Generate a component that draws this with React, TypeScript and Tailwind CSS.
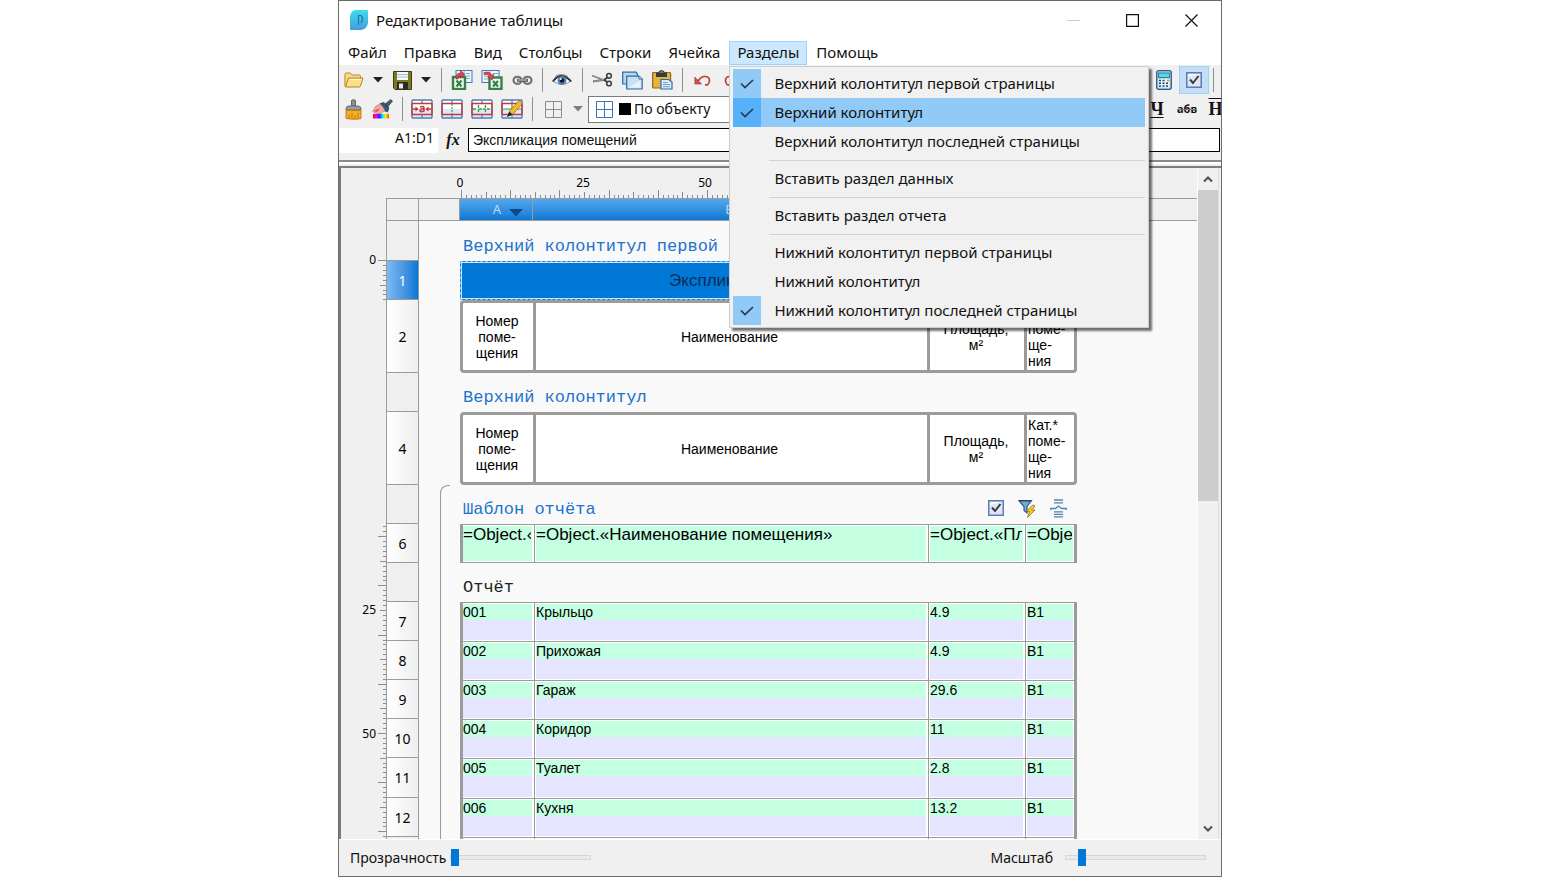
import React from "react";

const UI = "font-['Noto_Sans','Open_Sans',sans-serif]";
const ARIAL = "font-['Liberation_Sans',Arial,sans-serif]";
const MONO = "font-['Liberation_Mono','Courier_New',monospace]";

/* ---------- icons ---------- */

function AppLogo() {
  return (
    <svg width="18" height="20" viewBox="0 0 18 20" aria-hidden="true">
      <defs>
        <linearGradient id="logo" x1="0" y1="0" x2="0" y2="1">
          <stop offset="0" stopColor="#3fdcf0" />
          <stop offset="1" stopColor="#449bd8" />
        </linearGradient>
      </defs>
      <path d="M5 0H17Q18 0 18 1V13Q17 19 11 20H1Q0 20 0 19V6Q1 1 5 0Z" fill="url(#logo)" />
      <path d="M8.500 5V15M8.500 5.500H10.500Q12.500 6 12.500 9T10.500 12.500" fill="none" stroke="#1f74ab" strokeWidth="1.200" />
    </svg>
  );
}

function FolderIcon() {
  return (
    <svg width="20" height="16" viewBox="0 0 20 16" aria-hidden="true">
      <path d="M1 14.500V2.500Q1 1 2.500 1H6L8 3H15.500Q16.500 3 16.500 4.500V6" fill="#f7dc86" stroke="#b8861b" />
      <path d="M1.500 15 4.500 6H19L16.500 14Q16 15 15 15Z" fill="#fbe08c" stroke="#b8861b" />
      <path d="M5.500 7.500H17" stroke="#fff8d8" />
    </svg>
  );
}

function SaveIcon() {
  return (
    <svg width="19" height="19" viewBox="0 0 19 19" aria-hidden="true">
      <path d="M.5.5H18.500V18.500H2L.5 17Z" fill="#7d7a1e" stroke="#3b3a1e" />
      <rect x="4" y="1" width="11" height="8" fill="#f4f7fa" />
      <path d="M4 3.500H15M4 6H15" stroke="#a9bccd" />
      <rect x="4" y="11" width="11" height="7.500" fill="#2a2a28" />
      <rect x="6" y="12.500" width="4" height="5" fill="#e9e9e9" />
    </svg>
  );
}

function Caret({ light = false }: { light?: boolean }) {
  return (
    <svg width="10" height="6" viewBox="0 0 10 6" aria-hidden="true">
      <path d="M0 0H10L5 5.500Z" fill={light ? "#7f7f7f" : "#222"} />
    </svg>
  );
}

function ExcelOutIcon() {
  return (
    <svg width="22" height="20" viewBox="0 0 22 20" aria-hidden="true">
      <rect x="5" y=".5" width="16" height="12" fill="#eef5fc" stroke="#3f7bb5" />
      <path d="M15 3.500H19M15 6H19M15 8.500H19M13 .5V12" stroke="#7fa9d1" />
      <rect x="2" y="7" width="12" height="12" fill="#eaf5ea" stroke="#37804b" strokeWidth="2.400" />
      <path d="m5.500 10.500 5 6M10.500 10.500l-5 6" stroke="#2e7d46" strokeWidth="2" />
      <path d="M5 9Q4.500 3 9.500 3V.5L14 4.500 9.500 8V5.500Q7 5.500 7 9Z" fill="#e0444a" stroke="#a4252b" strokeWidth=".6" />
    </svg>
  );
}

function ExcelInIcon() {
  return (
    <svg width="22" height="20" viewBox="0 0 22 20" aria-hidden="true">
      <rect x="1" y=".5" width="17" height="12" fill="#eef5fc" stroke="#3f7bb5" />
      <path d="M12 3.500H17M3 6H8M3 9H8M9 .5V12" stroke="#7fa9d1" />
      <rect x="8.500" y="7.500" width="12" height="11.500" fill="#eaf5ea" stroke="#37804b" strokeWidth="2.400" />
      <path d="m12 11 5 5.500M17 11l-5 5.500" stroke="#2e7d46" strokeWidth="2" />
      <path d="M3 2.500Q9 1 10.500 5L13 4.500 11 10 6.500 7 8.500 6Q7 3.500 3 4.500Z" fill="#e0444a" stroke="#a4252b" strokeWidth=".6" />
    </svg>
  );
}

function LinkIcon() {
  return (
    <svg width="21" height="11" viewBox="0 0 21 11" fill="none" aria-hidden="true">
      <rect x="1.500" y="1.800" width="8" height="7" rx="3.500" stroke="#777" strokeWidth="2.200" />
      <rect x="11.500" y="1.800" width="8" height="7" rx="3.500" stroke="#777" strokeWidth="2.200" />
      <path d="M5 5.300H16" stroke="#5a5a5a" strokeWidth="3" />
      <path d="M6 5H15" stroke="#d4d4d4" strokeWidth="1" />
    </svg>
  );
}

function EyeIcon() {
  return (
    <svg width="20" height="14" viewBox="0 0 20 14" aria-hidden="true">
      <path d="M1 8Q9-1 19 8Q10 15 1 8Z" fill="#fff" stroke="#8a8a8a" />
      <path d="M.8 8.500Q9-2.500 19.300 8.500" fill="none" stroke="#333" strokeWidth="1.800" />
      <path d="M3 3.500Q9-.5 16 3.500" fill="none" stroke="#777" strokeWidth=".8" />
      <circle cx="10" cy="7.500" r="4.500" fill="#4f83b8" />
      <circle cx="10" cy="7.500" r="2.200" fill="#101820" />
      <circle cx="8.700" cy="6" r="1" fill="#fff" />
    </svg>
  );
}

function ScissorsIcon() {
  return (
    <svg width="22" height="16" viewBox="0 0 22 16" fill="none" aria-hidden="true">
      <path d="M1 3.500 14 8.500M2 9.500 15 7.500" stroke="#6b6b6b" strokeWidth="1.800" />
      <path d="M1 3.500 13 7.500M3 9.500 13 7.500" stroke="#b9b9b9" strokeWidth=".7" />
      <circle cx="18" cy="3.800" r="2.300" stroke="#3e3e3e" strokeWidth="1.600" />
      <circle cx="18" cy="11.500" r="2.300" stroke="#3e3e3e" strokeWidth="1.600" />
      <path d="M13 8 16.300 5.500M13 8 16.300 10" stroke="#3e3e3e" strokeWidth="1.800" />
    </svg>
  );
}

function CopyIcon() {
  return (
    <svg width="21" height="19" viewBox="0 0 21 19" aria-hidden="true">
      <path d="M.7 1.200H14L15.500 3V13H.7Z" fill="#b9d6ee" stroke="#2f69a3" strokeWidth="1.200" />
      <path d="M4.700 5.200H17L20.200 8V18H4.700Z" fill="#c7e0f4" stroke="#2f69a3" strokeWidth="1.200" />
      <path d="M17 5.200V8H20.200" fill="#fff" stroke="#2f69a3" />
      <path d="M6 16.500 18.500 9.500V16.500Z" fill="#e8f4fd" />
    </svg>
  );
}

function PasteIcon() {
  return (
    <svg width="21" height="20" viewBox="0 0 21 20" aria-hidden="true">
      <rect x=".6" y="2.500" width="18" height="15.500" rx="1" fill="#e2b247" stroke="#8f6a16" strokeWidth="1.200" />
      <rect x="4" y="2.500" width="11" height="4.500" fill="#3a3a36" />
      <path d="M7 3V1.500Q9.500-.5 12 1.500V3" fill="#7a7a72" stroke="#3a3a36" />
      <path d="M9 9.500H16.500L20 12V19H9Z" fill="#dcecf9" stroke="#2f69a3" strokeWidth="1.200" />
      <path d="M11 12.500H15.500M11 14.500H18M11 16.700H18" stroke="#6d9dc9" />
    </svg>
  );
}

function UndoIcon({ flip = false }: { flip?: boolean }) {
  return (
    <svg width="17" height="11" viewBox="0 0 17 11" fill="none" aria-hidden="true">
      <g transform={flip ? "matrix(-1 0 0 1 17 0)" : undefined}>
        <path d="M4 6.500Q6.500 1.500 11 1.500Q15.500 1.500 15.500 5.500Q15.500 8.500 13.500 9.800H11" stroke="#b9403d" strokeWidth="1.700" />
        <path d="M.8 2V9H7.500Z" fill="#c9504c" stroke="#a63a37" strokeWidth=".6" />
      </g>
    </svg>
  );
}

function CalculatorIcon() {
  return (
    <svg width="16" height="20" viewBox="0 0 16 20" aria-hidden="true">
      <rect x=".7" y=".7" width="14.600" height="18.600" rx="2" fill="#b5d2e8" stroke="#2b5f8c" strokeWidth="1.300" />
      <rect x="2.500" y="3" width="11" height="4.500" fill="#59d8e0" stroke="#1b6d8a" strokeWidth=".8" />
      <rect x="2.500" y="9" width="11" height="8.500" fill="#eef5fa" />
      <path d="M3 10.500H10M3 13.300H13M3 16H13" stroke="#20415f" strokeWidth="1.600" strokeDasharray="2 1.500" />
      <path d="M11 10.500H13.500" stroke="#e09a2c" strokeWidth="1.800" />
    </svg>
  );
}

function CheckBoxIcon({ size = 16 }: { size?: number }) {
  return (
    <svg width={size} height={size} viewBox="0 0 16 16" aria-hidden="true">
      <rect x=".8" y=".8" width="14.400" height="14.400" fill="#f6f9fd" stroke="#5b7fb4" strokeWidth="1.600" />
      <path d="M2 14V5L14 2V14Z" fill="#d5e0f2" opacity=".7" />
      <path d="m4 7.500 3 3.500 5.500-7" fill="none" stroke="#3c3c3c" strokeWidth="2" />
    </svg>
  );
}

function BrushIcon() {
  return (
    <svg width="17" height="21" viewBox="0 0 17 21" aria-hidden="true">
      <path d="M6.500 1.500Q8.500-.3 10.500 1.500V7H6.500Z" fill="#8d8d8d" stroke="#666" />
      <path d="M1 10Q1 7 4 7H13Q16 7 16 10V11H1Z" fill="#9b9b9b" stroke="#6b6b6b" />
      <path d="M1 11.500H16V19.500Q12 21 1 19.500Z" fill="#f4ad25" stroke="#c47f0c" />
      <path d="M4 16V20M7 14V20M10 16V20M13 14V20" stroke="#c47f0c" />
    </svg>
  );
}

function ColorBrushIcon() {
  return (
    <svg width="21" height="20" viewBox="0 0 21 20" aria-hidden="true">
      <defs>
        <linearGradient id="rainbow">
          <stop offset="0" stopColor="#f00" />
          <stop offset=".2" stopColor="#f0f" />
          <stop offset=".4" stopColor="#22f" />
          <stop offset=".6" stopColor="#0ee" />
          <stop offset=".8" stopColor="#fe0" />
          <stop offset="1" stopColor="#f40" />
        </linearGradient>
      </defs>
      <rect x="1" y="15" width="16" height="4.500" fill="url(#rainbow)" />
      <path d="M12 6 18.500.5 20.500 2 15 9Z" fill="#4a5a6d" stroke="#26313e" strokeWidth=".6" />
      <path d="M8 4.500 12 3.500 17 9 15.500 13 10 11Z" fill="#33567d" stroke="#1c2f47" strokeWidth=".6" />
      <path d="M.5 12.500 4 7 8.500 5 13 11 9 14.500H4Z" fill="#eda9a2" stroke="#b36b64" strokeWidth=".6" />
      <path d="M2 12 8 9 5 13Z" fill="#d84a4a" />
    </svg>
  );
}

function TableIcon({ kind }: { kind: "merge" | "split" | "cells" | "draw" }) {
  return (
    <svg width="22" height="20" viewBox="0 0 22 20" fill="none" aria-hidden="true">
      <path d="M1 1H21V19H1Z" fill="#fff" />
      <path d="M1 10H21V18H1Z" fill="#dbe8f5" />
      <path d="M11 1V4M11 16V19" stroke="#4c7fb5" strokeWidth="1.200" />
      <path d="M1 19V1M21 19V1M1 19H21M1 1H21" stroke="#4c7fb5" strokeWidth="1.400" />
      <path d="M1 4.500H21M1 15.500H21M1 4V16M21 4V16" stroke="#c23b3e" strokeWidth="1.400" />
      {kind === "merge" && (
        <>
          <path d="M2 10H7M20 10H15M9 8Q13 6.500 13 9V12.500M13 10Q9 9.500 9 11.500T13 12" stroke="#c23b3e" strokeWidth="1.600" />
          <path d="M4.500 7.500 7.500 10 4.500 12.500ZM17.500 7.500 14.500 10 17.500 12.500Z" fill="#c23b3e" />
        </>
      )}
      {kind === "split" && <path d="M11 5V15" stroke="#3c9a4c" strokeWidth="1.200" strokeDasharray="2 1" />}
      {kind === "cells" && (
        <path d="M2 10H6M8 10H14M16 10H20M7.500 6V14M14.500 6V14" stroke="#3c9a4c" strokeWidth="1.300" strokeDasharray="3 1" />
      )}
      {kind === "draw" && (
        <>
          <path d="M11 5V15M2 10H20" stroke="#3c9a4c" strokeWidth="1.200" />
          <path d="M7 17 9 11.500 18 1.500 21.500 4.500 12.500 14.500Z" fill="#f5b92b" stroke="#9a6a10" strokeWidth=".8" />
          <path d="M6 18 8.300 12.500 11.500 15.500Z" fill="#1d1d1d" />
        </>
      )}
    </svg>
  );
}

function GridIcon({ color }: { color: string }) {
  return (
    <svg width="17" height="17" viewBox="0 0 17 17" fill="none" stroke={color} aria-hidden="true">
      <path d="M.5.5H16.500V16.500H.5ZM8.500 1V16M1 8.500H16" />
    </svg>
  );
}

function FilterIcon() {
  return (
    <svg width="18" height="19" viewBox="0 0 18 19" aria-hidden="true">
      <path d="M.8 1.500H13.500L9 7.500V14L6 11.500V7.500Z" fill="#7fa8cf" stroke="#2c5d8f" strokeWidth="1.200" />
      <path d="M1 1.800H13" stroke="#1f4a78" strokeWidth="1.500" />
      <path d="M14.500 6 8.500 12.500H11.500L9.500 18.500 17 11H13.500L17 7Z" fill="#f8cf2c" stroke="#9b6d06" strokeWidth=".8" />
    </svg>
  );
}

function SplitRowsIcon() {
  return (
    <svg width="17" height="19" viewBox="0 0 17 19" fill="none" stroke="#4d86ad" strokeWidth="1.300" aria-hidden="true">
      <path d="M4 1H13M4 3.800H13M4 12.800H13M4 15.300H13M4 17.800H13" />
      <path d="M.7 11V9.500H5.500L8.500 7 11.500 9.500H16.300V11" />
    </svg>
  );
}

function CheckMark() {
  return (
    <svg width="14" height="10" viewBox="0 0 14 10" aria-hidden="true">
      <path d="m1 4.500 4 4L13 1" fill="none" stroke="#243b52" strokeWidth="1.700" />
    </svg>
  );
}

/* ---------- toolbar ---------- */

function Tool({ label, className = "w-[30px]", children }: { label: string; className?: string; children: React.ReactNode }) {
  return (
    <button type="button" aria-label={label} className={`flex h-7 shrink-0 items-center justify-center ${className}`}>
      {children}
    </button>
  );
}

function Sep({ className = "w-2.5" }: { className?: string }) {
  return (
    <span className={`flex shrink-0 justify-center ${className}`}>
      <span className="h-6 w-px bg-[#8f8f8f]" />
    </span>
  );
}

/* ---------- menu ---------- */

type Entry = { text: string; checked?: boolean; active?: boolean } | null;

const sectionsMenu: Entry[] = [
  { text: "Верхний колонтитул первой страницы", checked: true },
  { text: "Верхний колонтитул", checked: true, active: true },
  { text: "Верхний колонтитул последней страницы" },
  null,
  { text: "Вставить раздел данных" },
  null,
  { text: "Вставить раздел отчета" },
  null,
  { text: "Нижний колонтитул первой страницы" },
  { text: "Нижний колонтитул" },
  { text: "Нижний колонтитул последней страницы", checked: true },
];

function SectionsMenu() {
  return (
    <div
      role="menu"
      className="absolute top-full left-0 z-20 mt-px w-[420px] border border-[#ccc] bg-[#f1f1f1] px-[3px] py-0.5 shadow-[3px_3px_2px_rgba(0,0,0,0.55)]"
    >
      {sectionsMenu.map((item, i) =>
        item === null ? (
          <div key={i} role="separator" className="flex h-2 items-center pl-9">
            <span className="h-px w-full bg-[#d2d2d2]" />
          </div>
        ) : (
          <button
            key={i}
            type="button"
            role="menuitemcheckbox"
            aria-checked={!!item.checked}
            className={`flex h-[29px] w-full items-center text-left ${item.active ? "bg-[#91c9f7]" : ""}`}
          >
            <span
              className={`flex h-full w-7 shrink-0 items-center justify-center ${
                item.checked ? (item.active ? "bg-[#56b0fa]" : "bg-[#91c9f7]") : ""
              }`}
            >
              {item.checked && <CheckMark />}
            </span>
            <span className="pb-px pl-[13px] whitespace-nowrap">{item.text}</span>
          </button>
        ),
      )}
    </div>
  );
}

/* ---------- rulers ---------- */

const UNIT = 4.92;
const range = (a: number, b: number) => Array.from({ length: b - a + 1 }, (_, i) => a + i);
const tickSize = (v: number) => (v % 10 === 0 ? 8 : v % 5 === 0 ? 6 : 3);

function TopRuler() {
  return (
    <svg className="block h-[30px] w-full" aria-hidden="true">
      {range(0, 125).map((v) => {
        const x = Math.round(120 + v * UNIT) + 0.5;
        return <path key={v} d={`M${x} ${30 - tickSize(v)}V30`} stroke="#8c8c8c" />;
      })}
      <g className={`${UI} text-[12px]`} fill="#000" textAnchor="middle">
        <text x="119" y="19">0</text>
        <text x="242" y="19">25</text>
        <text x="364" y="19">50</text>
      </g>
    </svg>
  );
}

function SideRuler() {
  const tick = (v: number, y: number, key: string) => {
    const yy = Math.round(y) + 0.5;
    return <path key={key} d={`M${45 - tickSize(v)} ${yy}H45`} stroke="#8c8c8c" />;
  };
  return (
    <svg className="block h-full w-full" aria-hidden="true">
      {range(0, 8).map((v) => tick(v, 62 + v * UNIT, `a${v}`))}
      {range(8, 71).map((v) => tick(v, 535 - (50 - v) * UNIT, `b${v}`))}
      <g className={`${UI} text-[12px]`} fill="#000" textAnchor="end">
        <text x="35" y="66">0</text>
        <text x="35" y="416">25</text>
        <text x="35" y="540">50</text>
      </g>
    </svg>
  );
}

/* ---------- sheet ---------- */

function RowHead({ n, selected = false }: { n?: string; selected?: boolean }) {
  const fill = selected
    ? "bg-linear-to-r from-[#7bbaf0] to-[#0078d7] text-white"
    : n
      ? "bg-linear-to-r from-white to-[#eeeeee]"
      : "bg-[#efefef]";
  return (
    <th scope="row" className={`border-r border-b border-l border-[#9b9b9b] p-0 text-center text-[14px] font-normal ${fill}`}>
      {n}
    </th>
  );
}

function Bracket({ start = false }: { start?: boolean }) {
  return (
    <td className="p-0">
      <div className={`ml-[21px] h-full border-l border-[#9b9b9b] ${start ? "w-2.5 rounded-tl-lg border-t" : ""}`} />
    </td>
  );
}

function SectionRow({ title, height, black = false, bracket, tools = false }: {
  title: string;
  height: string;
  black?: boolean;
  bracket?: "start" | "mid";
  tools?: boolean;
}) {
  return (
    <tr className={height}>
      <RowHead />
      {bracket ? <Bracket start={bracket === "start"} /> : <td />}
      <td colSpan={4} className="p-0 align-bottom">
        <div className="flex items-center justify-between pr-2.5 pb-1 pl-[3px]">
          <span className={`${MONO} text-[17px] leading-5 whitespace-nowrap ${black ? "text-[#222]" : "text-[#1c72cc]"}`}>{title}</span>
          {tools && (
            <span className="flex h-5 items-center gap-3.5 pb-1">
              <button type="button" aria-label="Условие отчёта"><CheckBoxIcon /></button>
              <button type="button" aria-label="Быстрый фильтр"><FilterIcon /></button>
              <button type="button" aria-label="Разделить строки"><SplitRowsIcon /></button>
            </span>
          )}
        </div>
      </td>
      <td />
    </tr>
  );
}

const HEAD_CELL = "border-y-[3px] border-l-[3px] border-[#9b9b9b] bg-white p-0 text-[14px] leading-4";

function CaptionRow({ n }: { n: string }) {
  return (
    <tr className="h-[73px]">
      <RowHead n={n} />
      <td />
      <td className={`${HEAD_CELL} rounded-l-sm pr-0.5 text-center`}>Номер<br />поме-<br />щения</td>
      <td className={`${HEAD_CELL} pr-1 text-center`}>Наименование</td>
      <td className={`${HEAD_CELL} pr-0.5 text-center`}>Площадь,<br />м²</td>
      <td className={`${HEAD_CELL} rounded-r-sm border-r-[3px] pl-px text-left`}>Кат.*<br />поме-<br />ще-<br />ния</td>
      <td />
    </tr>
  );
}

const CELL = "border-t border-[#9b9b9b] overflow-hidden whitespace-nowrap align-top p-0 pl-[3px]";
const EDGE = "shadow-[inset_3px_0_0_#9b9b9b,inset_0_0_0_1px_#fff]";
const INNER = "shadow-[inset_1px_0_0_#fff,inset_2px_0_0_#9b9b9b,inset_3px_0_0_#fff,inset_0_0_0_1px_#fff]";
const LAST =
  "border-r-[3px] shadow-[inset_1px_0_0_#fff,inset_2px_0_0_#9b9b9b,inset_3px_0_0_#fff,inset_0_0_0_1px_#fff]";

function DataRow({ n, cells, height }: { n?: string; cells: string[]; height: string }) {
  const fill = "bg-[linear-gradient(#c4ffe1_0_17px,#e5e5ff_17px)] text-[14px] leading-[19px]";
  return (
    <tr className={height}>
      <RowHead n={n} />
      <Bracket />
      {cells.map((c, i) => (
        <td key={i} className={`${CELL} ${fill} ${i === 0 ? EDGE : i === 3 ? LAST : INNER}`}>
          {c}
        </td>
      ))}
      <td />
    </tr>
  );
}

const rooms = [
  { n: "7", h: "h-[39px]", c: ["001", "Крыльцо", "4.9", "В1"] },
  { n: "8", h: "h-[39px]", c: ["002", "Прихожая", "4.9", "В1"] },
  { n: "9", h: "h-[39px]", c: ["003", "Гараж", "29.6", "В1"] },
  { n: "10", h: "h-[39px]", c: ["004", "Коридор", "11", "В1"] },
  { n: "11", h: "h-10", c: ["005", "Туалет", "2.8", "В1"] },
  { n: "12", h: "h-[39px]", c: ["006", "Кухня", "13.2", "В1"] },
];

function Sheet() {
  const colHead =
    "border-y border-r border-[#9b9b9b] bg-linear-to-b from-[#52a8ee] to-[#0a78d2] p-0 text-center text-[13px] font-normal leading-none text-[#b9dcf8]";
  const templateCells = ["=Object.«Номер»", "=Object.«Наименование помещения»", "=Object.«Площадь»", "=Object.«Категория»"];
  return (
    <table className={`h-px w-full table-fixed border-separate border-spacing-0 bg-[#f9f9f9] text-black ${ARIAL}`}>
      <colgroup>
        <col className="w-[33px]" />
        <col className="w-[41px]" />
        <col className="w-[73px]" />
        <col className="w-[394px]" />
        <col className="w-[97px]" />
        <col className="w-[53px]" />
        <col />
      </colgroup>
      <thead className={UI}>
        <tr className="h-[23px]">
          <td className="border border-[#9b9b9b] bg-[#efefef] p-0" />
          <td className="border-y border-r border-[#9b9b9b] bg-[#efefef] p-0" />
          <th scope="col" className={colHead}>
            <span className="flex items-center justify-center gap-2 pl-6">
              A
              <svg width="14" height="8" viewBox="0 0 14 8" className="mt-1.5" aria-hidden="true">
                <path d="M0 0H14L7 7.500Z" fill="#0b4a86" />
              </svg>
            </span>
          </th>
          <th scope="col" className={colHead}>B</th>
          <th scope="col" className={colHead}>C</th>
          <th scope="col" className={colHead}>D</th>
          <td className="border-y border-[#9b9b9b] bg-[#efefef] p-0" />
        </tr>
      </thead>
      <tbody className="[&_th]:font-['Noto_Sans',sans-serif]">
        <SectionRow title="Верхний колонтитул первой страницы" height="h-10" />
        <tr className="h-[39px]">
          <RowHead n="1" selected />
          <td />
          <td
            colSpan={4}
            className="border border-dashed border-[#7fb9ea] bg-[#0078d7] p-0 text-center text-[17px] text-[#0a2d55] shadow-[inset_0_0_0_1px_#cfe6fa]"
          >
            Экспликация помещений
          </td>
          <td />
        </tr>
        <CaptionRow n="2" />
        <SectionRow title="Верхний колонтитул" height="h-[39px]" />
        <CaptionRow n="4" />
        <SectionRow title="Шаблон отчёта" height="h-[39px]" bracket="start" tools />
        <tr className="h-[39px]">
          <RowHead n="6" />
          <Bracket />
          {templateCells.map((c, i) => (
            <td
              key={c}
              className={`${CELL} border-b bg-[#c4ffe1] text-[17px] leading-5 ${i === 0 ? EDGE : i === 3 ? LAST : INNER}`}
            >
              <div className="mr-0.5 overflow-hidden">{c}</div>
            </td>
          ))}
          <td />
        </tr>
        <SectionRow title="Отчёт" height="h-[39px]" bracket="mid" black />
        {rooms.map((r) => (
          <DataRow key={r.n} n={r.n} cells={r.c} height={r.h} />
        ))}
        <DataRow cells={["", "", "", ""]} height="h-[39px]" />
      </tbody>
    </table>
  );
}

/* ---------- window ---------- */

const SLIDER =
  "m-0 h-[18px] w-[141px] appearance-none bg-transparent [&::-webkit-slider-runnable-track]:h-[5px] [&::-webkit-slider-runnable-track]:border [&::-webkit-slider-runnable-track]:border-[#d6d6d6] [&::-webkit-slider-runnable-track]:bg-[#e7eaea] [&::-webkit-slider-thumb]:-mt-[7px] [&::-webkit-slider-thumb]:h-[17px] [&::-webkit-slider-thumb]:w-2 [&::-webkit-slider-thumb]:appearance-none [&::-webkit-slider-thumb]:bg-[#0078d7]";

const menus = ["Файл", "Правка", "Вид", "Столбцы", "Строки", "Ячейка", "Разделы", "Помощь"];

export default function App() {
  return (
    <div className={`flex h-screen justify-center bg-white text-[14px] text-[#111] ${UI}`}>
      <div className="flex h-full w-full max-w-[884px] flex-col overflow-hidden border border-[#6a6a6a] bg-[#f0f0f0]">
        <header className="flex h-10 shrink-0 items-center bg-white pb-0.5 pl-[11px]">
          <AppLogo />
          <h1 className="pl-2 text-[15px]">Редактирование таблицы</h1>
          <div className="ml-auto flex">
            <button type="button" aria-label="Свернуть" className="flex h-9 w-[59px] items-center justify-center">
              <svg width="13" height="13" viewBox="0 0 13 13"><path d="M0 6.500H13" stroke="#ccc" /></svg>
            </button>
            <button type="button" aria-label="Развернуть" className="flex h-9 w-[59px] items-center justify-center">
              <svg width="13" height="13" viewBox="0 0 13 13" fill="none"><path d="M.6.600H12.400V12.400H.6Z" stroke="#111" strokeWidth="1.200" /></svg>
            </button>
            <button type="button" aria-label="Закрыть" className="flex h-9 w-[59px] items-center justify-center">
              <svg width="13" height="13" viewBox="0 0 13 13"><path d="m.5.500 12 12m0-12-12 12" stroke="#111" strokeWidth="1.200" /></svg>
            </button>
          </div>
        </header>

        <nav className="flex h-6 shrink-0 gap-px bg-white pl-px text-[15px] leading-5">
          {menus.map((m) => (
            <div key={m} className="relative">
              <button
                type="button"
                className={`h-6 px-2 pb-0.5 ${m === "Разделы" ? "bg-[#cce8ff] shadow-[inset_0_0_0_1px_#99d1ff]" : ""}`}
              >
                {m}
              </button>
              {m === "Разделы" && <SectionsMenu />}
            </div>
          ))}
        </nav>

        <div role="toolbar" className="flex h-[30px] shrink-0 items-center overflow-hidden">
          <Tool label="Открыть"><FolderIcon /></Tool>
          <Tool label="Недавние" className="w-[18px]"><Caret /></Tool>
          <Tool label="Сохранить"><SaveIcon /></Tool>
          <Tool label="Варианты сохранения" className="w-[18px]"><Caret /></Tool>
          <Sep className="w-3" />
          <Tool label="Экспорт в Excel"><ExcelOutIcon /></Tool>
          <Tool label="Импорт из Excel"><ExcelInIcon /></Tool>
          <Tool label="Связь"><LinkIcon /></Tool>
          <Sep />
          <Tool label="Просмотр"><EyeIcon /></Tool>
          <Sep />
          <Tool label="Вырезать"><ScissorsIcon /></Tool>
          <Tool label="Копировать"><CopyIcon /></Tool>
          <Tool label="Вставить"><PasteIcon /></Tool>
          <Sep />
          <Tool label="Отменить"><UndoIcon /></Tool>
          <Tool label="Вернуть"><UndoIcon flip /></Tool>
          <div className="ml-auto flex items-center">
            <Tool label="Калькулятор"><CalculatorIcon /></Tool>
            <Tool label="Условия" className="w-[30px] border border-[#99d1ff] bg-[#c5def5]"><CheckBoxIcon /></Tool>
            <Sep className="w-3 pr-1" />
          </div>
        </div>

        <div role="toolbar" className="flex h-7 shrink-0 items-center overflow-hidden">
          <Tool label="Очистить формат" className="w-7"><BrushIcon /></Tool>
          <Tool label="Копировать формат"><ColorBrushIcon /></Tool>
          <Sep />
          <Tool label="Объединить ячейки"><TableIcon kind="merge" /></Tool>
          <Tool label="Разбить ячейку"><TableIcon kind="split" /></Tool>
          <Tool label="Разбить область"><TableIcon kind="cells" /></Tool>
          <Tool label="Рисовать границы"><TableIcon kind="draw" /></Tool>
          <Sep />
          <Tool label="Границы" className="w-8"><GridIcon color="#8c8c8c" /></Tool>
          <Tool label="Тип границы" className="w-[18px]"><Caret light /></Tool>
          <button type="button" className="ml-px flex h-[27px] w-[170px] items-center border border-[#7a7a7a] bg-white pl-[7px]">
            <GridIcon color="#3b73b9" />
            <span className="mr-[3px] ml-1.5 size-3 bg-black" />
            <span className="pb-0.5">По объекту</span>
          </button>
          <div className="-mr-2 ml-auto flex items-center font-['Liberation_Serif',serif] text-[18px] font-bold">
            <Tool label="Подчёркнутый"><span className="underline underline-offset-2">Ч</span></Tool>
            <Tool label="Зачёркнутый" className={`w-[30px] text-[11px] ${UI}`}><span className="line-through decoration-[#777] decoration-1">абв</span></Tool>
            <Tool label="Надчёркнутый" className="w-[27px]"><span className="overline">Н</span></Tool>
          </div>
        </div>

        <div className="flex h-[34px] shrink-0 items-center pr-px">
          <div className="flex h-[25px] w-[99px] justify-end bg-white pr-1 leading-5">A1:D1</div>
          <span className="w-[30px] text-center font-['Liberation_Serif',serif] text-[16px] font-bold italic">fx</span>
          <input
            type="text"
            aria-label="Содержимое ячейки"
            defaultValue="Экспликация помещений"
            className={`h-6 min-w-0 flex-1 border border-black bg-white px-1 text-[14px] outline-none ${ARIAL}`}
          />
        </div>

        <div className="h-[9px] shrink-0 pt-[3px]">
          <div className="h-1 border-t-2 border-[#8a8a8a] bg-white" />
        </div>

        <main className="flex min-h-0 flex-1 border-t-2 border-l-2 border-[#7c7c7c]">
          <div className="flex min-w-0 flex-1 flex-col overflow-hidden">
            <TopRuler />
            <div className="flex min-h-0 flex-1 overflow-hidden">
              <div className="w-[45px] shrink-0">
                <SideRuler />
              </div>
              <div className="min-w-0 flex-1 bg-[#f9f9f9]">
                <Sheet />
              </div>
            </div>
          </div>
          <div className="flex w-[21px] shrink-0 flex-col border-l border-white bg-[#f0f0f0]">
            <button type="button" aria-label="Прокрутить вверх" className="flex h-[22px] shrink-0 items-center justify-center">
              <svg width="10" height="7" viewBox="0 0 10 7" fill="none"><path d="m1 5.500 4-4 4 4" stroke="#505050" strokeWidth="2" /></svg>
            </button>
            <div className="h-[311px] bg-[#cdcdcd]" />
            <button type="button" aria-label="Прокрутить вниз" className="mt-auto flex h-[22px] shrink-0 items-center justify-center">
              <svg width="10" height="7" viewBox="0 0 10 7" fill="none"><path d="m1 1.500 4 4 4-4" stroke="#505050" strokeWidth="2" /></svg>
            </button>
          </div>
          <div className="w-[3px] shrink-0 border-l border-[#ddd]" />
        </main>

        <footer className="flex h-[37px] shrink-0 items-center border-t border-white pr-[15px] pb-0.5 pl-[11px]">
          <label htmlFor="opacity">Прозрачность</label>
          <input id="opacity" type="range" min={0} max={100} defaultValue={0} className={`ml-1 ${SLIDER}`} />
          <label htmlFor="scale" className="ml-auto">Масштаб</label>
          <input id="scale" type="range" min={0} max={100} defaultValue={9} className={`ml-3 ${SLIDER}`} />
        </footer>
      </div>
    </div>
  );
}
